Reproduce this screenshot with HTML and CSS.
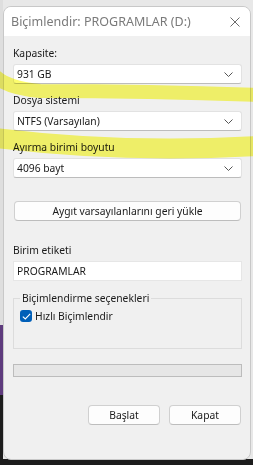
FILE: index.html
```html
<!DOCTYPE html>
<html>
<head>
    <title>Biçimlendir</title>
    <link rel="stylesheet" href="styles.css">
</head>
<body>
    <div class="desktop">
        <div class="window">
            <div class="titlebar">
                <span class="title">Biçimlendir: PROGRAMLAR (D:)</span>
                <svg class="close" width="10" height="10" viewBox="0 0 10 10">
                    <path d="M0.5 0.5 L9.5 9.5 M9.5 0.5 L0.5 9.5" stroke="#6b6b6b" stroke-width="1" fill="none"/>
                </svg>
            </div>
            <div class="content">
                <div class="field-label first">Kapasite:</div>
                <div class="select">
                    <span>931 GB</span>
                    <svg class="chevron" width="9" height="5" viewBox="0 0 9 5"><path d="M0.5 0.5 L4.5 4.5 L8.5 0.5" stroke="#555" fill="none"/></svg>
                </div>

                <div class="field-label">Dosya sistemi</div>
                <div class="select">
                    <span>NTFS (Varsayılan)</span>
                    <svg class="chevron" width="9" height="5" viewBox="0 0 9 5"><path d="M0.5 0.5 L4.5 4.5 L8.5 0.5" stroke="#555" fill="none"/></svg>
                </div>

                <div class="field-label">Ayırma birimi boyutu</div>
                <div class="select">
                    <span>4096 bayt</span>
                    <svg class="chevron" width="9" height="5" viewBox="0 0 9 5"><path d="M0.5 0.5 L4.5 4.5 L8.5 0.5" stroke="#555" fill="none"/></svg>
                </div>

                <button class="btn wide">Aygıt varsayılanlarını geri yükle</button>

                <div class="field-label label-gap">Birim etiketi</div>
                <div class="textbox">PROGRAMLAR</div>

                <fieldset class="options">
                    <legend>Biçimlendirme seçenekleri</legend>
                    <div class="check-row">
                        <span class="checkbox">
                            <svg width="9" height="7" viewBox="0 0 9 7"><path d="M0.8 3.6 L3.3 6 L8.2 0.9" stroke="#fff" stroke-width="1.1" fill="none"/></svg>
                        </span>
                        Hızlı Biçimlendir
                    </div>
                </fieldset>

                <div class="progress"></div>

                <div class="actions">
                    <button class="btn">Başlat</button>
                    <button class="btn">Kapat</button>
                </div>
            </div>
        </div>

        <!-- highlighter marks drawn over the screenshot -->
        <svg class="marker" width="253" height="465" viewBox="0 0 253 465">
            <path d="M-4 77 Q 8 88, 40 91 C 110 91, 180 92, 258 95" stroke="#fdfd6e" stroke-width="14" fill="none" stroke-linecap="round"/>
            <path d="M-4 138 C 60 146, 150 152, 258 146" stroke="#fdfd6e" stroke-width="20" fill="none" stroke-linecap="round"/>
        </svg>
    </div>
</body>
</html>
```

FILE: styles.css
```css
body {
    margin: 0;
    font-family: "Noto Sans", "Open Sans", sans-serif;
    font-size: 10.3px;
    color: #1a1a1a;
}
.desktop {
    position: relative;
    width: 253px;
    height: 465px;
    box-sizing: border-box;
    padding: 6px 2px 0 3px;
    background:
        linear-gradient(#1c1c1c, #1c1c1c) bottom / 100% 6px no-repeat,
        linear-gradient(to bottom, #dedede 0 325px, #5e3b7d 325px 395px, #1c1c1c 395px) left / 3px 100% no-repeat,
        #e8e8e8;
}
.window {
    height: 454px;
    background: #f0f0f0;
    border: 1px solid #c8c8c8;
    border-radius: 8px;
    box-sizing: border-box;
    overflow: hidden;
}
.titlebar {
    height: 29px;
    background: #fff;
    display: flex;
    align-items: center;
    justify-content: space-between;
    padding: 0 10px 0 7px;
}
.title {
    color: #7a7a7a;
    font-size: 12.5px;
}
.content {
    padding: 0 8px 0 9px;
    display: flex;
    flex-direction: column;
}
.field-label {
    line-height: 16px;
    margin-top: 8px;
    margin-bottom: 3px;
}
.field-label.first {
    margin-top: 9px;
}
.field-label.label-gap {
    margin-top: 21px;
}
.select, .textbox {
    height: 20px;
    background: #fff;
    border: 1px solid #e2e2e2;
    border-bottom-color: #bcbcbc;
    border-radius: 3px;
    box-sizing: border-box;
    display: flex;
    align-items: center;
    justify-content: space-between;
    padding: 0 8px 0 3px;
}
.textbox {
    border-radius: 0;
    border-color: #e6e6e6;
}
.btn {
    font-family: inherit;
    font-size: inherit;
    color: #1a1a1a;
    height: 20px;
    padding: 0;
    background: #fdfdfd;
    border: 1px solid #d0d0d0;
    border-bottom-color: #bdbdbd;
    border-radius: 4px;
}
.btn.wide {
    margin: 23px 1px 0 1px;
}
.options {
    margin: 10px 0 0 0;
    padding: 4px 6px 0 6px;
    height: 58px;
    box-sizing: border-box;
    border: 1px solid #dcdcdc;
    border-radius: 0;
}
.options legend {
    padding: 0 2px;
    margin-left: 0;
}
.check-row {
    display: flex;
    align-items: center;
    gap: 3px;
}
.checkbox {
    width: 12px;
    height: 12px;
    border-radius: 3px;
    background: #005fb8;
    display: flex;
    align-items: center;
    justify-content: center;
}
.progress {
    margin-top: 15px;
    height: 13px;
    background: #e6e6e6;
    border: 1px solid #bcbcbc;
    box-sizing: border-box;
}
.actions {
    margin-top: 28px;
    display: flex;
    justify-content: flex-end;
    gap: 9px;
    padding-right: 1px;
}
.actions .btn {
    width: 72px;
}
.marker {
    position: absolute;
    left: 0;
    top: 0;
    mix-blend-mode: multiply;
    pointer-events: none;
}
```
